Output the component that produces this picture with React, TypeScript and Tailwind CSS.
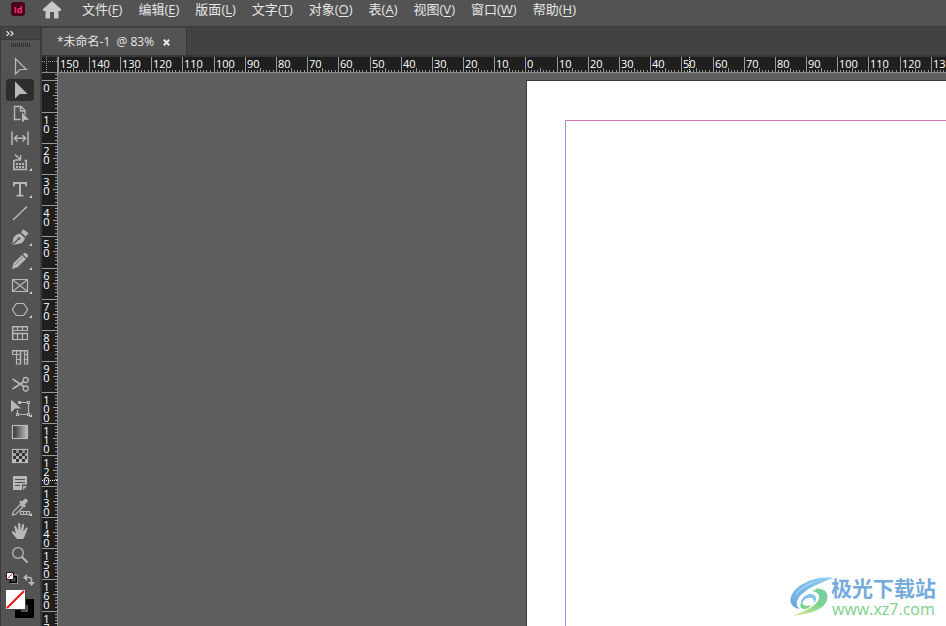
import type { ReactNode } from "react";

const SANS = "font-['Open_Sans','Noto_Sans_CJK_SC',sans-serif]";

const menus: [string, string][] = [
  ["文件", "F"],
  ["编辑", "E"],
  ["版面", "L"],
  ["文字", "T"],
  ["对象", "O"],
  ["表", "A"],
  ["视图", "V"],
  ["窗口", "W"],
  ["帮助", "H"],
];

type Tool = { name: string; art: ReactNode; active?: boolean; more?: boolean };

const fill = { fill: "currentColor", stroke: "none" };

const toolGroups: Tool[][] = [
  [
    { name: "选择工具", art: <path d="M9.5 4.8V20l4.6-4.5h6.2z" /> },
    { name: "直接选择工具", active: true, art: <path {...fill} d="M9 3.5V20.5l4.8-4.6H21.5z" /> },
    {
      name: "页面工具",
      art: (
        <>
          <path strokeWidth="1.4" d="M14.5 17.5h-6v-13H15l4 4v4M14.5 4.5v4.5H19" />
          <path {...fill} d="M16 10.5V20.5l3-2.8h4z" />
        </>
      ),
    },
    {
      name: "间隙工具",
      art: (
        <>
          <path strokeWidth="1.500" d="M6 5.500v13.500M22 5.500v13.500M8.500 12.300h11" />
          <path strokeWidth="1.500" d="M11.500 9.200l-3 3.100 3 3.100M16.500 9.200l3 3.100-3 3.100" />
        </>
      ),
    },
    {
      name: "内容收集器工具",
      more: true,
      art: (
        <>
          <path strokeWidth="1.6" d="M9.500 10.500H7.800v9h12.400v-9H18.500" />
          <path strokeWidth="1.500" d="M9 4.500l5 5M14.500 5v5H9.500" />
          <path {...fill} d="M10 13h2v2h-2zM13 13h2v2h-2zM16 13h2v2h-2zM10 16h2v2h-2zM13 16h2v2h-2zM16 16h2v2h-2z" />
        </>
      ),
    },
  ],
  [
    {
      name: "文字工具",
      more: true,
      art: <path {...fill} d="M7 5h14v4.500h-1.500L19 7h-4v10.500l2.500.5v1.500h-7V18l2.500-.5V7H9l-.5 2.500H7z" />,
    },
    { name: "直线工具", art: <path strokeWidth="1.500" d="M7 19L21 5.500" /> },
    {
      name: "钢笔工具",
      more: true,
      art: (
        <>
          <path {...fill} d="M6 20l1.500-7.500c2-2.500 4-3.500 6.500-4l5 4.500c-.5 2.500-2 4.500-4.500 5.500z" />
          <path {...fill} d="M15 7.200l2.500-3 5 4-2.700 3.300z" />
          <path className="stroke-[#535353]" d="M6.500 19.500l6-5.500" />
          <circle className="fill-[#535353]" stroke="none" cx="13" cy="13.500" r="1.300" />
        </>
      ),
    },
    {
      name: "铅笔工具",
      more: true,
      art: (
        <>
          <path {...fill} d="M6 20l1.500-5.700 8.300-8.300 4.200 4-8.500 8.300z" />
          <path {...fill} d="M16.800 5.200l1.500-1.200h1.500l2.200 2v1.500l-1.300 1.500z" />
          <path className="stroke-[#737373]" strokeWidth=".8" d="M9 16l8-8" />
        </>
      ),
    },
    {
      name: "矩形框架工具",
      more: true,
      art: <path d="M6.500 6.500h15v12h-15zM6.500 6.500l15 12M21.500 6.500l-15 12" />,
    },
    { name: "多边形工具", more: true, art: <path d="M10.300 6.500h7.400l4 6-4 6h-7.400l-4-6z" /> },
    {
      name: "水平网格工具",
      art: (
        <>
          <path strokeWidth="1.500" d="M6 5.700h16M6 12.500h16M6.700 5v14" />
          <path d="M7 9.500h15M11.500 6v3.500M16.500 6v3.500M21.500 6v3.500M7 18.500h15M11.500 13v5.500M16.500 13v5.500M21.500 13v5.500" />
        </>
      ),
    },
    {
      name: "垂直网格工具",
      art: (
        <>
          <path strokeWidth="1.500" d="M6 5.700h16M14.500 5v14.500M21.500 5v14.500" />
          <path d="M6.500 5v4.500M10.500 5v14.500M18.500 5v14.500M6 9.500h8.500M18.500 9.500h3M10.500 14.500h4M18.500 14.500h3M10.500 19h4M18.500 19h3" />
        </>
      ),
    },
  ],
  [
    {
      name: "剪刀工具",
      art: (
        <>
          <path strokeWidth="1.700" d="M6.500 7l11.500 7.500M6.500 17L18 9.500" />
          <circle strokeWidth="1.300" cx="19.700" cy="8" r="2.500" />
          <circle strokeWidth="1.300" cx="19.700" cy="16.500" r="2.500" />
        </>
      ),
    },
    {
      name: "自由变换工具",
      more: true,
      art: (
        <>
          <path d="M12 6.500h10M11.500 18.500h10.500M11.500 14v4M22.500 7v11" />
          <path {...fill} d="M5 3.500v13l4-4h6zM10 17h3v3h-3zM21 17h3v3h-3zM21 5h3v3h-3zM12 5h3v3h-3z" />
          <path className="fill-[#535353]" stroke="none" d="M11 18h1v1h-1zM22 18h1v1h-1zM22 6h1v1h-1z" />
        </>
      ),
    },
    {
      name: "渐变色板工具",
      art: (
        <>
          <linearGradient id="swatchGradient">
            <stop offset="0" stopColor="#303030" />
            <stop offset="1" stopColor="#c4c4c4" />
          </linearGradient>
          <rect x="6.500" y="5.500" width="15" height="13" fill="url(#swatchGradient)" />
        </>
      ),
    },
    {
      name: "渐变羽化工具",
      art: (
        <>
          <linearGradient id="featherGradient" x1="0" y1="0" x2="0" y2="1">
            <stop offset="0" stopColor="#8a8a8a" />
            <stop offset="1" stopColor="#c4c4c4" />
          </linearGradient>
          <rect x="6.500" y="5.500" width="15" height="13" fill="#333" />
          <path
            fill="url(#featherGradient)"
            stroke="none"
            d="M10 6h3v3h-3zM16 6h3v3h-3zM7 9h3v3H7zM13 9h3v3h-3zM19 9h2v3h-2zM10 12h3v3h-3zM16 12h3v3h-3zM7 15h3v3H7zM13 15h3v3h-3zM19 15h2v3h-2z"
          />
        </>
      ),
    },
  ],
  [
    {
      name: "附注工具",
      art: (
        <>
          <path {...fill} d="M7 5h14v8.500h-5V19H7z" />
          <path {...fill} d="M17 15h4l-4 4z" />
          <path className="stroke-[#535353]" d="M9 8.500h10M9 11.500h10M9 14.500h5" />
        </>
      ),
    },
    {
      name: "颜色主题工具",
      more: true,
      art: (
        <>
          <path strokeWidth="1.300" d="M6.500 20l1-3.500 7-7 2.500 2.500-7 7z" />
          <path {...fill} d="M13 7l1.500-1.500 1.500 1L18.500 4c1.500-1 4 1 3 2.700L18.800 9.500l1 1.500-1.500 1.500z" />
          <path d="M14.500 16.500h9v3h-9zM17.500 16.500v3M20.500 16.500v3" />
        </>
      ),
    },
    {
      name: "抓手工具",
      art: (
        <path
          {...fill}
          d="M11 20c-1-1.500-3.300-4-5-6.300-.7-1 .7-1.900 1.700-1.100l2.300 1.900L8.200 8c-.3-1.200 1.500-1.700 2-.5l2 4.500-.1-7c0-1.300 2-1.400 2.200 0l.4 6.800 1.400-6.100c.3-1.200 2.100-.9 2 .3l-.8 6.700 2.500-3.800c.7-1 2.300-.3 1.800.9-1.700 3.200-1.900 6.700-4.400 10.200z"
        />
      ),
    },
    {
      name: "缩放显示工具",
      art: (
        <>
          <circle cx="12" cy="10" r="5.300" strokeWidth="1.300" />
          <path strokeWidth="2" d="M16 14l5.500 5.500" />
        </>
      ),
    },
  ],
];

function ToolButton({ tool }: { tool: Tool }) {
  return (
    <button type="button" aria-label={tool.name} aria-pressed={!!tool.active} className="flex h-6 w-7 shrink-0">
      <svg
        viewBox="0 0 28 24"
        className="h-6 w-7 overflow-visible text-[#b8b8b8]"
        fill="none"
        stroke="currentColor"
        strokeWidth="1.200"
      >
        {tool.active && <rect x="0" y="1" width="28" height="22" rx="3" fill="#2d2d2d" stroke="none" />}
        {tool.art}
        {tool.more && <path fill="#d0d0d0" stroke="none" d="M26 18v3h-3z" />}
      </svg>
    </button>
  );
}

// Distance on screen between two labelled ruler marks (10 mm at 83%).
const STEP = 31.18;
const TICKS = [1, 2, 3, 4, 5, 6, 7, 8, 9];

function markAt(origin: number, n: number) {
  return Math.floor(origin + n * STEP);
}

// Marks from `first` up to the end of the window along one axis.
function marksUpTo(end: number, origin: number, first: number) {
  const last = Math.floor((end - origin) / STEP);
  return Array.from({ length: last - first + 1 }, (_, i) => first + i);
}

function HorizontalRuler() {
  return (
    <div className="relative flex h-4 min-w-0 flex-1 overflow-hidden border-b border-[#8c8c8c] bg-[#1f1f1f]">
      {marksUpTo(window.innerWidth, 525.96, -15).map((n) => (
        <div
          key={n}
          className="relative h-[15px] shrink-0 border-l border-[#9a9a9a]"
          style={{ width: markAt(525.96, n + 1) - markAt(525.96, n) }}
        >
          <span className="block pl-px text-[11px] leading-[13px] text-white">{Math.abs(n) * 10}</span>
          <svg className="absolute bottom-0 left-0 h-1 w-8" viewBox="0 0 32 4" shapeRendering="crispEdges">
            {TICKS.map((t) => (
              <rect
                key={t}
                x={Math.floor((t * STEP) / 10) - 1}
                y={t === 5 ? 0 : 2}
                width="1"
                height={t === 5 ? 4 : 2}
                fill="#9a9a9a"
              />
            ))}
          </svg>
        </div>
      ))}
      <i className="absolute inset-y-0 left-[631px] border-l border-dotted border-white" />
    </div>
  );
}

function VerticalRuler() {
  return (
    <div className="relative w-4 shrink-0 overflow-hidden border-r border-[#8c8c8c] bg-[#1f1f1f]">
      <div className="absolute inset-x-0 top-0">
        <div className="flex h-[7px] flex-col items-end justify-between py-px">
          <i className="h-px w-[2px] bg-[#9a9a9a]" />
          <i className="h-px w-[2px] bg-[#9a9a9a]" />
        </div>
        {marksUpTo(window.innerHeight, 80.96, 0).map((n) => (
          <div
            key={n}
            className="relative border-t border-[#9a9a9a]"
            style={{ height: markAt(80.96, n + 1) - markAt(80.96, n) }}
          >
            <span className="flex w-[9px] flex-col items-center pt-[2px] text-[11px] leading-[9px] text-white">
              {String(n * 10)
                .split("")
                .map((d, i) => (
                  <span key={i}>{d}</span>
                ))}
            </span>
            <svg className="absolute top-0 right-0 h-8 w-1" viewBox="0 0 4 32" shapeRendering="crispEdges">
              {TICKS.map((t) => (
                <rect
                  key={t}
                  y={Math.floor((t * STEP) / 10) - 1}
                  x={t === 5 ? 0 : 2}
                  height="1"
                  width={t === 5 ? 4 : 2}
                  fill="#9a9a9a"
                />
              ))}
            </svg>
          </div>
        ))}
      </div>
      <i className="absolute inset-x-0 top-[407px] border-t border-dotted border-white" />
    </div>
  );
}

function Swatches() {
  return (
    <div className="flex flex-col">
      <div className="flex h-[23px] items-start justify-between pt-[5px]">
        <button type="button" aria-label="默认填色和描边">
          <svg className="h-3 w-3" viewBox="0 0 12 12">
            <rect x="4.500" y="4.500" width="6" height="6" fill="none" stroke="#000" strokeWidth="2" />
            <path d="M3 3h8.700v8.700H4" fill="none" stroke="#ccc" strokeWidth=".7" />
            <rect x=".5" y=".5" width="7" height="7" fill="#fff" stroke="#222" />
            <path d="M1.500 6.500l5-5" stroke="#e02020" />
          </svg>
        </button>
        <button type="button" aria-label="互换填色和描边" className="mt-[2px]">
          <svg className="h-3 w-3" viewBox="0 0 12 12" fill="none" stroke="#b8b8b8" strokeWidth="1.500">
            <path d="M3 3.500h3.500q2 0 2 2V9" />
            <path fill="#b8b8b8" stroke="none" d="M0 3.500L4 0v7zM5 8h7l-3.500 4z" />
          </svg>
        </button>
      </div>
      <button type="button" aria-label="填色和描边" className="h-7 w-7">
        <svg className="h-[29px] w-[29px]" viewBox="0 0 29 29" shapeRendering="crispEdges">
          <path fill="#000" fillRule="evenodd" d="M9 9h19v19H9zM15 15v7h7v-7z" />
          <rect width="20" height="20" fill="#444" />
          <rect width="19" height="19" fill="#fff" />
          <path d="M1 18L18 1" stroke="#f01010" strokeWidth="2" shapeRendering="auto" />
        </svg>
      </button>
    </div>
  );
}

function Watermark() {
  return (
    <div className="absolute right-[10px] bottom-2 flex items-end">
      <svg className="-mr-[3px] h-[42px] w-[45px]" viewBox="0 0 45 42">
        <defs>
          <linearGradient id="swirlTop" x1="0" y1="1" x2="1" y2="0">
            <stop offset="0" stopColor="#6aa6e4" />
            <stop offset="1" stopColor="#8fd0ef" />
          </linearGradient>
          <linearGradient id="swirlBottom" x1="0" y1="1" x2="1" y2="0">
            <stop offset="0" stopColor="#e4ea9a" />
            <stop offset=".5" stopColor="#7ad48b" />
            <stop offset="1" stopColor="#6fc6c8" />
          </linearGradient>
        </defs>
        <path
          fill="url(#swirlTop)"
          d="M44 2C30 0 15 5 6 14c-8 9-5 18 5 19-5-3-4-9 1-14C19 12 31 7 44 2z"
        />
        <path fill="#fff" d="M33 5C20 6 8 14 5 23 8 13 19 6 33 5z" />
        <path fill="url(#swirlTop)" d="M12 30c-1-7 4-12 10-12 5 0 7 5 3 9 0-4-2-6-5-5-4 0-7 3-8 8z" />
        <path
          fill="url(#swirlBottom)"
          d="M44 2c-5 7-11 9-18 11 10-1 14 4 12 11C35 34 20 38 3 40c10-4 21-8 26-15 3-6 0-9-6-10C30 12 38 10 44 2z"
        />
        <path fill="#7ad48b" d="M13 26c1 4 5 5 9 3-2 4-7 5-10 3-1-2-1-4 1-6z" />
      </svg>
      <div className="flex flex-col">
        <span className="text-[21px] leading-[23px] font-bold text-[#76aadc]">极光下载站</span>
        <span className="pl-px text-[16px] leading-[18px] font-medium text-[#7bd08c]">www.xz7.com</span>
      </div>
    </div>
  );
}

export default function App() {
  return (
    <div className={`${SANS} relative flex h-screen flex-col overflow-hidden bg-[#535353] text-[#e6e6e6]`}>
      <header className="flex h-[27px] shrink-0 items-start border-b border-[#3a3a3a] pl-[11px]">
        <div className="mt-[2px] flex h-[14px] w-[14px] items-center justify-center rounded-[3px] bg-[#49021f] text-[9px] leading-none font-bold text-[#ff3366]">
          Id
        </div>
        <button type="button" aria-label="主页" className="mt-px ml-[17px]">
          <svg className="h-[18px] w-5" viewBox="0 0 20 18" fill="#c8c8c8">
            <path d="M10 0l9.500 8.500-1 1.500H16.500v7.500H12V11H8v6.500H3.500V10h-2l-1-1.500z" />
          </svg>
        </button>
        <nav className="ml-5 flex gap-4 text-[13px] leading-[18px]">
          {menus.map(([label, key]) => (
            <button type="button" key={key} className="whitespace-nowrap">
              {label}(<span className="underline underline-offset-2">{key}</span>)
            </button>
          ))}
        </nav>
      </header>

      <div className="flex min-h-0 flex-1">
        <aside className="flex w-[42px] shrink-0 flex-col border-r-2 border-l border-[#3c3c3c]">
          <button
            type="button"
            aria-label="展开面板"
            className="flex h-[13px] items-center border-b border-[#3a3a3a] bg-[#444444] pl-[5px]"
          >
            <svg className="h-[5px] w-2" viewBox="0 0 8 5" fill="none" stroke="#d8d8d8" strokeWidth="1.300">
              <path d="M.5 0L3 2.500.5 5M4.500 0L7 2.500 4.500 5" />
            </svg>
          </button>
          <div className="mx-auto mt-[3px] flex h-1 w-5 justify-between">
            {[...TICKS, 10].map((t) => (
              <i key={t} className="w-px bg-[#2f2f2f]" />
            ))}
          </div>
          <div className="mt-[7px] flex flex-col gap-[3px] pl-[5px]">
            {toolGroups.map((group, i) => (
              <div key={i} className="flex flex-col">
                {group.map((tool) => (
                  <ToolButton key={tool.name} tool={tool} />
                ))}
              </div>
            ))}
          </div>
          <div className="w-[34px] pl-[5px]">
            <Swatches />
          </div>
        </aside>

        <main className="flex min-w-0 flex-1 flex-col">
          <div className="flex h-[30px] shrink-0 border-b-2 border-[#383838] bg-[#424242] pt-px">
            <div className="flex w-[145px] items-center border-r border-[#383838] bg-[#535353] pt-px pl-[15px] text-xs">
              <span className="whitespace-pre">*未命名-1  @ 83%</span>
              <button type="button" aria-label="关闭文档" className="ml-[9px]">
                <svg className="h-[7px] w-[7px]" viewBox="0 0 7 7" stroke="#e8e8e8" strokeWidth="2">
                  <path d="M.8.8l5.400 5.400M6.200.8L.8 6.200" />
                </svg>
              </button>
            </div>
          </div>

          <div className="flex shrink-0">
            <svg className="h-4 w-4 bg-[#1f1f1f]" viewBox="0 0 16 16" shapeRendering="crispEdges">
              <path d="M4.500 0v15M0 4.500h15" stroke="#9a9a9a" strokeDasharray="1 1" />
              <path d="M15.500 0v16M0 15.500h16" stroke="#8c8c8c" />
            </svg>
            <HorizontalRuler />
          </div>

          <div className="flex min-h-0 flex-1">
            <VerticalRuler />
            <div className="flex min-w-0 flex-1 bg-[#5e5e5e] pt-[7px] pl-[468px]">
              <div className="flex flex-1 border-t border-l border-[#3c3c3c] bg-white pt-[39px] pl-[38px]">
                <div className="flex-1 border-t border-l border-t-[#cf7bb4] border-l-[#9c92e8]" />
              </div>
            </div>
          </div>
        </main>
      </div>

      <Watermark />
    </div>
  );
}
